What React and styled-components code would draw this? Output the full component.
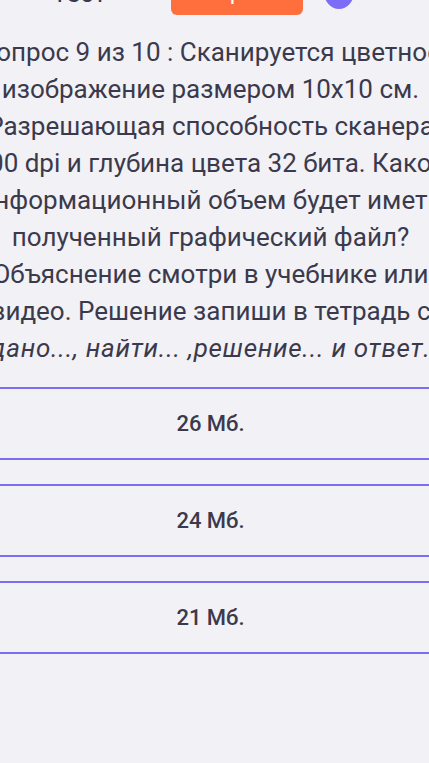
import styled, { createGlobalStyle } from 'styled-components';

const GlobalStyle = createGlobalStyle`
  html, body {
    margin: 0;
    padding: 0;
    background: #f2f1f6;
    overflow: hidden;
  }
  body {
    font-family: Roboto, "Noto Sans", sans-serif;
    color: #3b3a4c;
  }
`;

const questionLines = [
  'Вопрос 9 из 10 : Сканируется цветное',
  'изображение размером 10x10 см.',
  'Разрешающая способность сканера',
  '600 dpi и глубина цвета 32 бита. Какой',
  'информационный объем будет иметь',
  'полученный графический файл?',
  'Объяснение смотри в учебнике или',
  'видео. Решение запиши в тетрадь с',
];

const answers = ['26 Мб.', '24 Мб.', '21 Мб.'];

export default function App() {
  return (
    <>
      <GlobalStyle />
      <Page>
        <Header>
          <Title>Тест</Title>
          <FinishButton>Завершить</FinishButton>
          <Avatar />
        </Header>
        <Question>
          {questionLines.map((line) => (
            <Line key={line}>{line}</Line>
          ))}
          <Line italic>дано..., найти... ,решение... и ответ.</Line>
        </Question>
        <Answers>
          {answers.map((a) => (
            <Answer key={a}>{a}</Answer>
          ))}
        </Answers>
      </Page>
    </>
  );
}

const Page = styled.div`
  width: 429px;
  min-height: 763px;
  box-sizing: border-box;
  padding-right: 8px;
  display: flex;
  flex-direction: column;
`;

const Header = styled.header`
  margin-top: -29px;
  height: 44px;
  display: flex;
  align-items: center;
  padding-left: 52px;
  padding-right: 8px;
`;

const Title = styled.div`
  font-size: 26px;
  line-height: 30px;
  width: 119px;
`;

const FinishButton = styled.button`
  width: 132px;
  height: 44px;
  border: none;
  border-radius: 6px;
  background: #ff6e3d;
  color: #ffffff;
  font-family: Roboto, sans-serif;
  font-size: 18px;
  font-weight: 500;
  padding: 0;
`;

const Avatar = styled.div`
  width: 30px;
  height: 34px;
  margin-left: 21px;
  margin-bottom: 2px;
  border-radius: 50%;
  background: #7d6cf5;
`;

const Question = styled.div`
  margin-top: 19px;
  display: flex;
  flex-direction: column;
  align-items: center;
  font-size: 26px;
  line-height: 37px;
`;

const Line = styled.span`
  white-space: nowrap;
  font-style: ${(p) => (p.italic ? 'italic' : 'normal')};
  letter-spacing: ${(p) => (p.italic ? '0.7px' : '0')};
`;

const Answers = styled.div`
  margin-top: 20px;
  display: flex;
  flex-direction: column;
  gap: 24px;
`;

const Answer = styled.div`
  height: 69px;
  border-top: 2px solid #7d6cf5;
  border-bottom: 2px solid #7d6cf5;
  margin: 0 -8px 0 0;
  padding-right: 8px;
  display: flex;
  align-items: center;
  justify-content: center;
  font-size: 22px;
  font-weight: 500;
  color: #3b3a4c;
`;
